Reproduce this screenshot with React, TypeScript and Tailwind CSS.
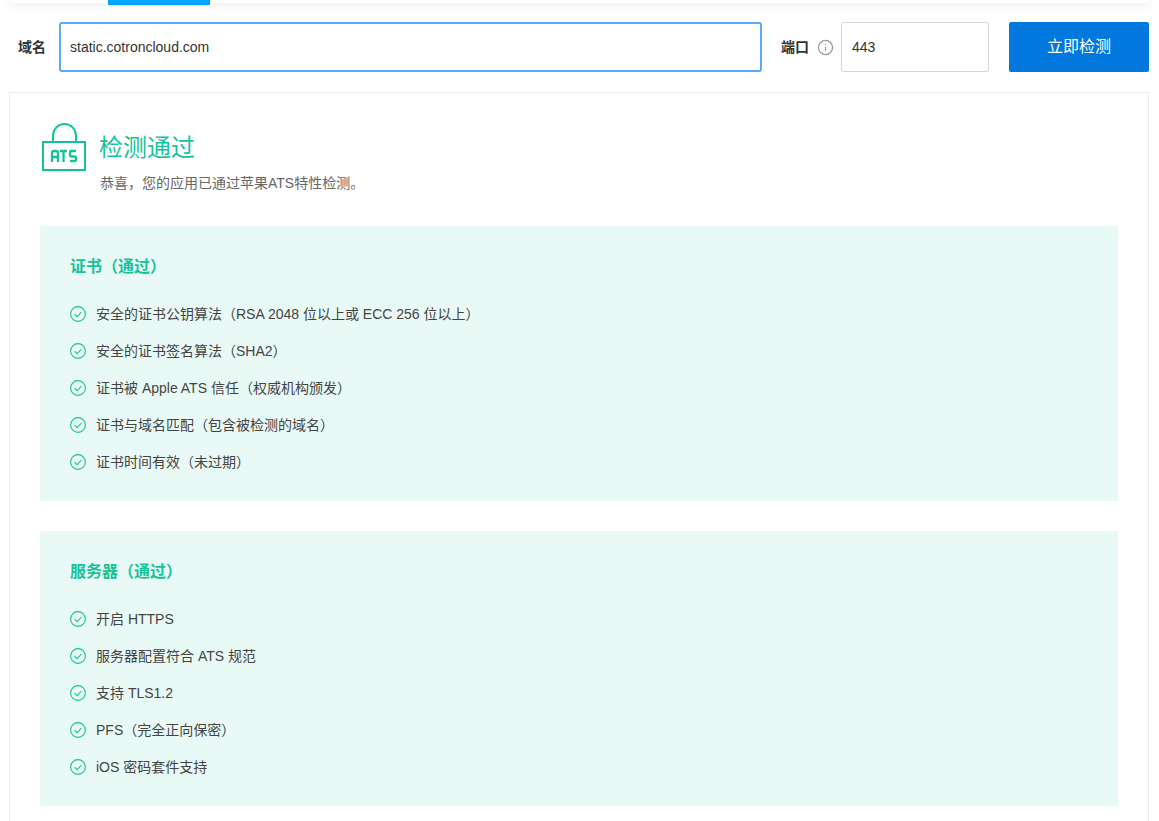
import { Info } from "lucide-react";

const font = "font-['Liberation_Sans','Noto_Sans_CJK_SC',sans-serif]";

const sections = [
  {
    title: "证书（通过）",
    items: [
      "安全的证书公钥算法（RSA 2048 位以上或 ECC 256 位以上）",
      "安全的证书签名算法（SHA2）",
      "证书被 Apple ATS 信任（权威机构颁发）",
      "证书与域名匹配（包含被检测的域名）",
      "证书时间有效（未过期）",
    ],
  },
  {
    title: "服务器（通过）",
    items: [
      "开启 HTTPS",
      "服务器配置符合 ATS 规范",
      "支持 TLS1.2",
      "PFS（完全正向保密）",
      "iOS 密码套件支持",
    ],
  },
];

function CheckIcon() {
  return (
    <svg width="16" height="16" viewBox="0 0 16 16" fill="none" stroke="#15c39a" className="shrink-0">
      <circle cx="8" cy="8" r="7.4" strokeWidth="1.1" />
      <path d="M4.6 8.1 L7.2 10.6 L11.4 6" strokeWidth="1.1" />
    </svg>
  );
}

function AtsLogo() {
  return (
    <svg width="48" height="50" viewBox="0 0 48 50" fill="none" stroke="#15c39a" strokeWidth="2" className="shrink-0">
      <path d="M13 18 V12.5 A11.5 11.5 0 0 1 36 12.5 V18" />
      <rect x="3" y="19" width="42" height="28" />
      <g strokeWidth="2.3">
        <path d="M12 39 V30 Q12 28 14 28 H16 Q18 28 18 30 V39 M12 34 H18" />
        <path d="M20 28 H27 M23.5 28 V39" />
        <path d="M36 28 H31 Q30 28 30 29.5 V32 Q30 33.5 31 33.5 H35 Q36 33.5 36 35 V37 Q36 38 35 38 H30" />
      </g>
    </svg>
  );
}

function Section({ title, items }: { title: string; items: string[] }) {
  return (
    <div className="bg-[#e9faf6] h-[275px] pt-[30px] px-[30px]">
      <h3 className="text-[16px] leading-[22px] font-bold text-[#15c39a]">{title}</h3>
      <ul className="mt-[26px] flex flex-col gap-[17px]">
        {items.map((item) => (
          <li key={item} className="flex items-center gap-[10px] h-5 text-[14px] text-[#444]">
            <CheckIcon />
            <span>{item}</span>
          </li>
        ))}
      </ul>
    </div>
  );
}

export default function App() {
  return (
    <div className={`${font} h-[821px] overflow-hidden bg-white text-[#333]`}>
      <div className="mx-[10px] h-[3px] bg-white shadow-[0_0_10px_rgba(0,0,0,0.18)] relative">
        <div className="absolute left-[98px] top-0 w-[102px] h-[5px] bg-[#00a4ff]" />
      </div>

      <div className="flex items-center h-[50px] mt-[19px] pl-[18px]">
        <label className="w-[28px] text-[14px] font-bold shrink-0">域名</label>
        <div className="ml-[13px] w-[703px] h-[50px] border-2 border-[#5ba8ff] rounded-[3px] flex items-center pl-[9px] text-[14px] text-[#333]">
          static.cotroncloud.com
        </div>
        <label className="ml-[19px] w-[28px] text-[14px] font-bold shrink-0">端口</label>
        <Info size={17} strokeWidth={1.8} className="ml-[8px] text-[#999] shrink-0" />
        <div className="ml-[7px] w-[148px] h-[50px] border border-[#d5d5d5] rounded-[3px] flex items-center pl-[10px] text-[14px]">
          443
        </div>
        <button className="ml-[20px] w-[140px] h-[50px] bg-[#0078de] rounded-[2px] text-white text-[16px]">
          立即检测
        </button>
      </div>

      <div className="ml-[9px] w-[1140px] mt-[20px] border border-[#e8edf4] px-[30px] pt-[30px] pb-[30px]">
        <div className="flex items-start gap-[12px] h-[103px]">
          <AtsLogo />
          <div className="pt-[8px]">
            <h2 className="-ml-px text-[24px] leading-[34px] text-[#15c39a]">检测通过</h2>
            <p className="mt-[8px] text-[14px] leading-5 text-[#666]">恭喜，您的应用已通过苹果ATS特性检测。</p>
          </div>
        </div>
        <div className="flex flex-col gap-[30px]">
          {sections.map((s) => (
            <Section key={s.title} title={s.title} items={s.items} />
          ))}
        </div>
      </div>
    </div>
  );
}
